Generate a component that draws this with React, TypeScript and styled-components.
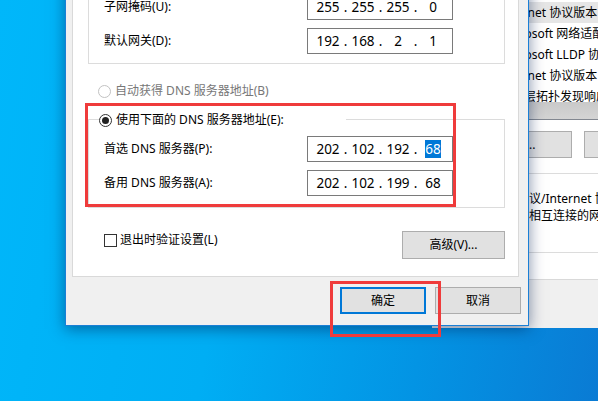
import React from 'react'
import styled, { createGlobalStyle } from 'styled-components'

// ── Global ───────────────────────────────────────────────────────────────────

const GlobalStyle = createGlobalStyle`
  html, body { margin: 0; padding: 0; }
  body {
    width: 598px;
    height: 401px;
    overflow: hidden;
    font-family: "Noto Sans", "Noto Sans CJK SC", sans-serif;
    font-size: 12px;
    color: #000;
  }
  * { box-sizing: border-box; }
`

const UI_FONT = `"Noto Sans", "Noto Sans CJK SC", sans-serif`

// ── Desktop ──────────────────────────────────────────────────────────────────

const Desktop = styled.div`
  position: relative;
  width: 598px;
  height: 401px;
  overflow: hidden;
  background: linear-gradient(100deg, #00b7fa 0%, #00aef4 40%, #0394e4 72%, #0a7bd4 100%);
`

// ── Background window (Ethernet properties, mostly covered) ──────────────────

const BackWindow = styled.div`
  position: absolute;
  left: 432px;
  top: -60px;
  width: 320px;
  height: 388px;
  background: #f0f0f0;
  padding: 0 8px;
`

const TabPage = styled.div`
  height: 340px;
  background: #fff;
  border: 1px solid #d9d9d9;
  border-top: none;
  padding: 19px 0 0 6px;
  display: flex;
  flex-direction: column;
`

const ListBox = styled.div`
  height: 161px;
  border: 1px solid #828790;
  display: flex;
  flex-direction: column;
`

const ListRows = styled.div`
  flex: 1;
  overflow: hidden;
`

const ListRow = styled.div<{ $selected?: boolean }>`
  height: 21px;
  padding-left: 52px;
  display: flex;
  align-items: center;
  white-space: nowrap;
  line-height: 16px;
  background: ${(p) => (p.$selected ? '#e6e6e6' : 'transparent')};
`

const HScroll = styled.div`
  height: 17px;
  background: linear-gradient(#c9c9c9, #d4d4d4);
`

const BackButtons = styled.div`
  display: flex;
  gap: 12px;
  margin: 11px 0 0 2px;
`

const BackButton = styled.div`
  width: 123px;
  height: 27px;
  flex-shrink: 0;
  background: #e1e1e1;
  border: 1px solid #adadad;
  display: flex;
  align-items: center;
  justify-content: center;
  line-height: 16px;
`

const DescGroup = styled.div`
  margin-top: 15px;
  height: 80px;
  border: 1px solid #dcdcdc;
  padding: 16px 0 0 21px;
`

const DescLine = styled.div`
  height: 17px;
  line-height: 17px;
  white-space: nowrap;
`

// ── Dialog ───────────────────────────────────────────────────────────────────

const Dialog = styled.div`
  position: absolute;
  left: 65px;
  top: -60px;
  width: 464px;
  height: 386px;
  background: #f0f0f0;
  border: 1px solid #1a7fd6;
  box-shadow: 0 3px 14px rgba(0, 30, 80, 0.5);
  padding: 6px 9px 11px 6px;
  display: flex;
  flex-direction: column;
`

const Panel = styled.div`
  background: #fff;
  border: 1px solid #d9d9d9;
  padding: 4px 13px 17px 15px;
  display: flex;
  flex-direction: column;
`

const GroupBox = styled.div<{ $padTop: number; $padBottom: number }>`
  border: 1px solid #dcdcdc;
  padding: ${(p) => p.$padTop}px 51px ${(p) => p.$padBottom}px 15px;
  display: flex;
  flex-direction: column;
  gap: 8px;
`

const Legend = styled.div`
  display: flex;
  align-items: center;
  gap: 4px;
  width: 247px;
  height: 16px;
  margin: -8px 0 0 -5px;
  background: #fff;
  line-height: 16px;
  white-space: nowrap;
`

const FieldRow = styled.div`
  height: 26px;
  display: flex;
  align-items: center;
  justify-content: space-between;
`

const Label = styled.span`
  line-height: 16px;
  white-space: nowrap;
`

const IpBox = styled.div`
  width: 146px;
  height: 26px;
  border: 1px solid #7a7a7a;
  background: #fff;
  display: flex;
  align-items: center;
  padding-left: 6px;
  font-family: "Noto Sans", sans-serif;
  font-size: 13.5px;
  line-height: 17px;
`

const Octet = styled.span`
  width: 28px;
  text-align: center;
`

const Dot = styled.span`
  width: 7px;
  text-align: center;
`

const Selected = styled.span`
  background: #0078d7;
  color: #fff;
`

const OptionRow = styled.div<{ $gap: number }>`
  display: flex;
  align-items: center;
  gap: 4px;
  height: 16px;
  margin: ${(p) => p.$gap}px 0 0 10px;
  line-height: 16px;
  white-space: nowrap;
`

const Radio = styled.span<{ $checked?: boolean; $disabled?: boolean }>`
  width: 13px;
  height: 13px;
  border-radius: 50%;
  border: 1px solid ${(p) => (p.$disabled ? '#c2c2c2' : '#333')};
  background: #fff;
  display: inline-flex;
  align-items: center;
  justify-content: center;
  flex-shrink: 0;

  &::after {
    content: '';
    width: 7px;
    height: 7px;
    border-radius: 50%;
    background: #222;
    display: ${(p) => (p.$checked ? 'block' : 'none')};
  }
`

const DisabledText = styled.span`
  color: #777;
`

const DnsSection = styled.div`
  margin-top: 20px;
`

const BottomRow = styled.div`
  margin-top: 23px;
  display: flex;
  justify-content: space-between;
  align-items: flex-start;
  padding-left: 16px;
`

const CheckRow = styled.label`
  display: flex;
  align-items: center;
  gap: 3px;
  height: 16px;
  margin-top: 1px;
  line-height: 16px;
`

const CheckBox = styled.span`
  width: 13px;
  height: 13px;
  border: 1px solid #333;
  background: #fff;
  flex-shrink: 0;
`

const Button = styled.button<{ $w: number; $h: number; $default?: boolean }>`
  width: ${(p) => p.$w}px;
  height: ${(p) => p.$h}px;
  padding: 0;
  background: #e1e1e1;
  border: ${(p) => (p.$default ? '2px solid #0078d7' : '1px solid #adadad')};
  font-family: ${UI_FONT};
  font-size: 12px;
  line-height: 16px;
  color: #000;
`

const ButtonRow = styled.div`
  margin: 10px -2px 0 0;
  display: flex;
  justify-content: flex-end;
  gap: 9px;
`

// ── Annotation frames ────────────────────────────────────────────────────────

const RedFrame = styled.div<{ $x: number; $y: number; $w: number; $h: number }>`
  position: absolute;
  left: ${(p) => p.$x}px;
  top: ${(p) => p.$y}px;
  width: ${(p) => p.$w}px;
  height: ${(p) => p.$h}px;
  border: 3px solid #ef3b3b;
  pointer-events: none;
`

// ── Pieces ───────────────────────────────────────────────────────────────────

function IpField({ parts, selected }: { parts: string[]; selected?: number }) {
  return (
    <IpBox>
      {parts.map((part, i) => (
        <React.Fragment key={i}>
          <Octet>{selected === i ? <Selected>{part}</Selected> : part}</Octet>
          {i < 3 && <Dot>.</Dot>}
        </React.Fragment>
      ))}
    </IpBox>
  )
}

const COMPONENTS = [
  { name: 'Microsoft 网络的文件和打印机共享' },
  { name: 'QoS 数据包计划程序' },
  { name: 'Internet 协议版本 4 (TCP/IPv4)', selected: true },
  { name: 'Microsoft 网络适配器多路传送器协议' },
  { name: 'Microsoft LLDP 协议驱动程序' },
  { name: 'Internet 协议版本 6 (TCP/IPv6)' },
  { name: '链路层拓扑发现响应程序' },
]

// ── App ──────────────────────────────────────────────────────────────────────

export default function App() {
  return (
    <>
      <GlobalStyle />
      <Desktop>
        <BackWindow>
          <TabPage>
            <ListBox>
              <ListRows>
                {COMPONENTS.map((c) => (
                  <ListRow key={c.name} $selected={c.selected}>{c.name}</ListRow>
                ))}
              </ListRows>
              <HScroll />
            </ListBox>
            <BackButtons>
              <BackButton>安装(N)...</BackButton>
              <BackButton>卸载(U)</BackButton>
            </BackButtons>
            <DescGroup>
              <DescLine>传输控制协议/Internet 协议。该协议是默认的广域网络协议，</DescLine>
              <DescLine>用于不同的相互连接的网络上的通讯。</DescLine>
            </DescGroup>
          </TabPage>
        </BackWindow>

        <Dialog>
          <Panel>
            <GroupBox $padTop={7} $padBottom={9}>
              <FieldRow>
                <Label>IP 地址(I):</Label>
                <IpField parts={['192', '168', '2', '100']} />
              </FieldRow>
              <FieldRow>
                <Label>子网掩码(U):</Label>
                <IpField parts={['255', '255', '255', '0']} />
              </FieldRow>
              <FieldRow>
                <Label>默认网关(D):</Label>
                <IpField parts={['192', '168', '2', '1']} />
              </FieldRow>
            </GroupBox>

            <OptionRow $gap={19}>
              <Radio $disabled />
              <DisabledText>自动获得 DNS 服务器地址(B)</DisabledText>
            </OptionRow>

            <DnsSection>
              <GroupBox $padTop={0} $padBottom={11}>
                <Legend>
                  <Radio $checked />
                  <span>使用下面的 DNS 服务器地址(E):</span>
                </Legend>
                <FieldRow>
                  <Label>首选 DNS 服务器(P):</Label>
                  <IpField parts={['202', '102', '192', '68']} selected={3} />
                </FieldRow>
                <FieldRow>
                  <Label>备用 DNS 服务器(A):</Label>
                  <IpField parts={['202', '102', '199', '68']} />
                </FieldRow>
              </GroupBox>
            </DnsSection>

            <BottomRow>
              <CheckRow>
                <CheckBox />
                <span>退出时验证设置(L)</span>
              </CheckRow>
              <Button $w={103} $h={28}>高级(V)...</Button>
            </BottomRow>
          </Panel>

          <ButtonRow>
            <Button $w={86} $h={27} $default>确定</Button>
            <Button $w={86} $h={27}>取消</Button>
          </ButtonRow>
        </Dialog>

        <RedFrame $x={85} $y={103} $w={371} $h={104} />
        <RedFrame $x={330} $y={281} $w={111} $h={56} />
      </Desktop>
    </>
  )
}
